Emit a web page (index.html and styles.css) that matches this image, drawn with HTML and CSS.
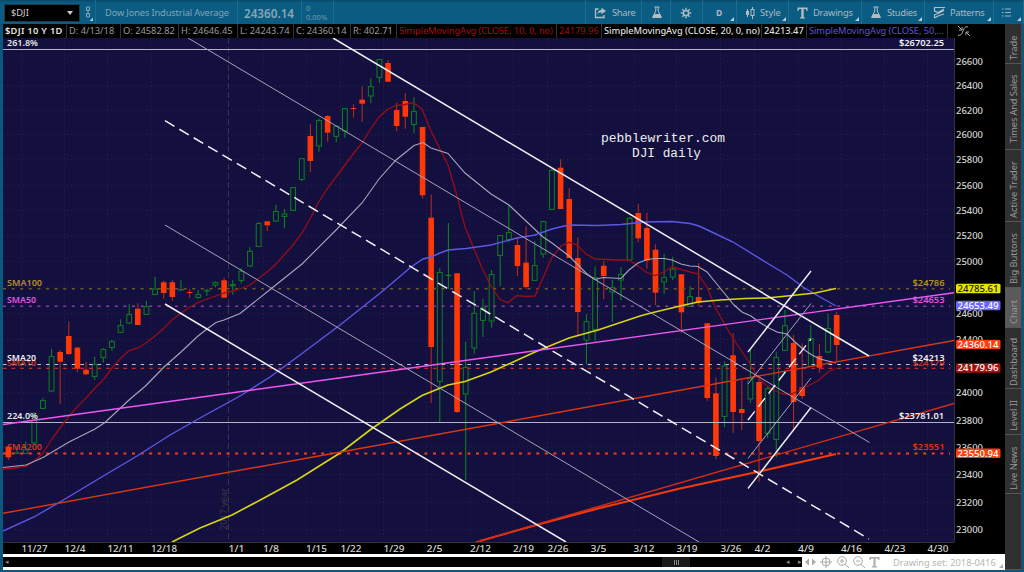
FILE: index.html
```html
<!DOCTYPE html>
<html lang="en">
<head>
    <meta charset="UTF-8">
    <meta name="viewport" content="width=device-width, initial-scale=1.0">
    <title>$DJI - Charts</title>
    <link rel="stylesheet" href="styles.css">
</head>
<body>
    <div class="app">
        <div class="toolbar">
            <div class="symbol-wrap">
                <div class="symbol"><span>$DJI</span><b class="drop"></b></div>
                <svg class="link-icon" width="8" height="18" viewBox="0 0 8 18"><path d="M1.500 6.500V3h3v3.500zM3 5.500v5M1.500 9.500v3.500h3V9.500z" fill="none" stroke="#7fa5b8"/><path d="M8 13.500v3.500H4.500z" fill="#b5c6cf"/></svg>
            </div>
            <div class="company">Dow Jones Industrial Average</div>
            <div class="last">24360.14</div>
            <div class="change"><span>0</span><span>0.00%</span></div>
            <div class="spacer"></div>
            <div class="tool share">
                <svg width="13" height="12" viewBox="0 0 13 12"><path d="M4.500 2H1.500v8.500h8.500V8" fill="none" stroke="#b3bdc2" stroke-width="1.300"/><path d="M7.500.8 12 4 7.500 7.300V5.300C5.300 5.300 4.300 6 3.500 8 3.600 4.800 5 3 7.500 2.800z" fill="#b3bdc2"/></svg>
                <span>Share</span>
            </div>
            <div class="tool flask">
                <svg width="12" height="13" viewBox="0 0 12 13"><path d="M3.500 1h5M4.800 1v4L1.500 11.500h9L7.200 5V1" fill="none" stroke="#b3bdc2"/><path d="M3.300 8h5.400l2 4H1.300z" fill="#b3bdc2"/></svg>
            </div>
            <div class="tool gear">
                <svg width="12" height="12" viewBox="0 0 12 12"><g stroke="#b3bdc2" stroke-width="1.500"><path d="M6 .8v2M6 9.200v2M.8 6h2M9.200 6h2M2.300 2.300l1.500 1.500M8.200 8.200l1.500 1.500M2.300 9.700l1.500-1.500M8.200 3.800l1.500-1.500"/><circle cx="6" cy="6" r="2.600" fill="none"/></g></svg>
            </div>
            <div class="tool day menu"><b>D</b></div>
            <div class="tool style menu">
                <svg width="10" height="12" viewBox="0 0 10 12"><path d="M2.500 2v8M7.500 0v12" stroke="#b3bdc2"/><path d="M1 4h3v4H1z" fill="#b3bdc2"/><rect x="6" y="2.500" width="3" height="6" fill="#0b5c83" stroke="#b3bdc2"/></svg>
                <span>Style</span>
            </div>
            <div class="tool drawings menu">
                <svg width="11" height="12" viewBox="0 0 11 12"><path d="M.5.500h10v3.500H9.500L8.800 2H6.700v8l1.300.700V11.500H3v-.8L4.300 10V2H2.200L1.500 4H.5z" fill="#b3bdc2"/></svg>
                <span>Drawings</span>
            </div>
            <div class="tool studies menu">
                <svg width="12" height="13" viewBox="0 0 12 13"><path d="M3.500 1h5M4.800 1v4L1.500 11.500h9L7.200 5V1" fill="none" stroke="#b3bdc2"/><path d="M3.300 8h5.400l2 4H1.300z" fill="#b3bdc2"/></svg>
                <span>Studies</span>
            </div>
            <div class="tool patterns menu">
                <svg width="12" height="13" viewBox="0 0 12 13"><path d="M1 1.500h11M1.500 1.500v3.500L5 6.500 11 3M1 9l4-1.500 6-3M1.500 12V9.500M1.500 12 6 9.500 11 8" fill="none" stroke="#b3bdc2" stroke-width="1.200"/></svg>
                <span>Patterns</span>
            </div>
            <div class="tool list menu">
                <svg width="9" height="9" viewBox="0 0 9 9"><path d="M0 1h1.500M3 1h6M0 4.500h1.500M3 4.500h6M0 8h1.500M3 8h6" stroke="#9ab3bf" stroke-width="1.200"/></svg>
            </div>
        </div>

        <div class="main">
            <div class="left">
                <div class="status">
                    <div class="cell c-sym">$DJI 10 Y 1D</div>
                    <div class="cell c-date">D: 4/13/18</div>
                    <div class="cell c-open">O: 24582.82</div>
                    <div class="cell c-high">H: 24646.45</div>
                    <div class="cell c-low">L: 24243.74</div>
                    <div class="cell c-close">C: 24360.14</div>
                    <div class="cell c-range">R: 402.71</div>
                    <div class="cell c-ma10 red">SimpleMovingAvg (CLOSE, 10, 0, no)</div>
                    <div class="cell c-val10 red">24179.96</div>
                    <div class="cell c-ma20 white">SimpleMovingAvg (CLOSE, 20, 0, no)</div>
                    <div class="cell c-val20 white">24213.47</div>
                    <div class="cell c-ma50 blue">SimpleMovingAvg (CLOSE, 50,...</div>
                    <div class="corner"><svg width="14" height="12" viewBox="0 0 14 12"><path d="M1 1l4 4M5 2v3H2M1 10c3 1 4-1 5-4s2-5 5-4M9 7l4 4M9 10V7h3" fill="none" stroke="#aaa"/></svg></div>
                </div>
                <svg class="chart" id="chart" viewBox="3 38 1002 516"></svg>
                <div class="bottom">
                    <div class="scroll">
                        <span class="arrow">◂</span>
                        <div class="thumb"><i></i><i></i><i></i></div>
                        <span class="arrow">◂</span><span class="arrow">▸</span>
                    </div>
                    <div class="draw-tools">
                        <svg width="78" height="14" viewBox="0 0 78 14" fill="none" stroke="#aaa">
                            <path d="M7 3.500v7L3 7zM10 3.500v7L14 7z" fill="#aaa" stroke="none"/>
                            <circle cx="24" cy="7" r="4"/><path d="M24 1v12M18 7h12"/>
                            <circle cx="40" cy="6" r="4.300"/><path d="M38 6h4M40 4v4M43 9l4 4"/>
                            <circle cx="56" cy="6" r="4.300"/><path d="M54 6h4M59 9l4 4"/>
                            <path d="M67.500 2h10v3h-1l-1-1.500h-2V11l1.500.500v1h-5v-1l1.500-.5V3.500h-2L68.500 5h-1z" fill="#aaa" stroke="none"/>
                        </svg>
                        <span>Drawing set: 2018-0416</span>
                        <b class="corner-mark"></b>
                    </div>
                </div>
            </div>
            <div class="tabs">
                <div class="tab t-trade">Trade</div>
                <div class="tab t-times">Times And Sales</div>
                <div class="tab t-active">Active Trader</div>
                <div class="tab t-big">Big Buttons</div>
                <div class="tab t-chart active">Chart</div>
                <div class="tab t-dash">Dashboard</div>
                <div class="tab t-level">Level II</div>
                <div class="tab t-news">Live News</div>
                <div class="tab t-rest"></div>
            </div>
        </div>
    </div>
    <script src="chart.js"></script>
</body>
</html>
```
FILE: styles.css
```css
body {
    margin: 0;
    background: #0b5c83;
    font-family: "Noto Sans", "Open Sans", sans-serif;
    font-size: 9.3px;
    color: #a9b9c1;
    overflow: hidden;
}
.app {
    width: 1024px;
    height: 572px;
    display: flex;
    flex-direction: column;
    background: #0a587e;
}
.toolbar {
    height: 24px;
    display: flex;
    align-items: stretch;
    background: linear-gradient(#07496b 0, #0b5c83 3px, #0b5c83 100%);
    white-space: nowrap;
}
.toolbar > div {
    box-sizing: border-box;
    display: flex;
    align-items: center;
    padding-top: 1px;
    border-right: 1px solid #1a6d92;
}
.symbol-wrap {
    width: 96px;
    padding-left: 4px;
    gap: 5px;
}
.symbol {
    width: 76px;
    height: 18px;
    box-sizing: border-box;
    padding: 0 6px;
    display: flex;
    align-items: center;
    justify-content: space-between;
    background: #000;
    border: 1px solid #1d3b49;
    color: #ccc;
}
.drop {
    border: 3px solid transparent;
    border-top: 4px solid #ccc;
    border-bottom: 0;
}
.company {
    width: 142px;
    padding-left: 9px;
    color: #7fa5b8;
    letter-spacing: -0.15px;
}
.last {
    width: 64px;
    padding-left: 6px;
    font-size: 11.7px;
    font-weight: 600;
    color: #88a6b4;
}
.toolbar .change {
    width: 32px;
    padding-left: 4px;
    flex-direction: column;
    align-items: flex-start;
    justify-content: center;
    font-size: 7.5px;
    line-height: 9px;
    color: #7198aa;
}
.spacer {
    flex: 1;
}
.toolbar .tool {
    gap: 5px;
    padding-left: 8px;
    position: relative;
    color: #a9b9c1;
}
.share {
    width: 56px;
    letter-spacing: -0.3px;
}
.flask {
    width: 29px;
}
.gear {
    width: 32px;
}
.toolbar .flask,
.toolbar .gear {
    padding-left: 9px;
}
.day {
    width: 34px;
}
.toolbar .day {
    padding-left: 13px;
    font-size: 8.5px;
}
.style {
    width: 52px;
}
.drawings {
    width: 73px;
    letter-spacing: -0.2px;
}
.studies {
    width: 63px;
    letter-spacing: -0.3px;
}
.patterns {
    width: 69px;
    letter-spacing: -0.3px;
}
.list {
    width: 30px;
}
.menu::after {
    content: "";
    position: absolute;
    right: 2px;
    bottom: 3px;
    border-left: 4px solid transparent;
    border-bottom: 4px solid #c0ccd2;
}
.main {
    height: 546px;
    display: flex;
    padding-left: 3px;
}
.left {
    width: 1002px;
    display: flex;
    flex-direction: column;
    background: #000;
}
.status {
    height: 14px;
    display: flex;
    line-height: 13px;
    white-space: nowrap;
    color: #9a9a9a;
}
.cell {
    box-sizing: border-box;
    padding-left: 2px;
    border-right: 1px solid #333;
}
.c-sym {
    width: 64px;
    font-weight: 600;
    letter-spacing: 0.3px;
    color: #e2e2e2;
}
.c-date { width: 54px; }
.c-open { width: 58px; }
.c-high { width: 59px; }
.c-low { width: 56px; }
.c-close { width: 57px; }
.c-range { width: 46px; }
.c-ma10 { width: 160px; }
.c-val10 { width: 45px; }
.c-ma20 { width: 160px; }
.c-val20 { width: 45px; }
.c-ma50 { width: 141px; }
.c-ma10,
.c-ma20,
.c-ma50 {
    letter-spacing: -0.08px;
}
.c-ma20,
.c-val20 {
    font-weight: 500;
}
.red { color: #a00f12; }
.white { color: #ddd; }
.blue { color: #5a56dc; }
.corner {
    padding: 1px 0 0 9px;
}
.chart {
    display: block;
    width: 1002px;
    height: 516px;
    font-size: 9.3px;
    overflow: visible;
}
.axis-label {
    fill: #d4d4d4;
    font-weight: 500;
}
.tag-label {
    font-weight: 500;
}
.level-label {
    font-weight: 600;
}
.note {
    font-family: "Liberation Mono", monospace;
    font-size: 12px;
    fill: #eee;
}
.year {
    fill: #3b3946;
}
.bottom {
    height: 16px;
    display: flex;
    background: #fff;
}
.scroll {
    width: 799px;
    height: 10px;
    margin-top: 3px;
    display: flex;
    align-items: center;
    gap: 6px;
    background: #000;
    font-size: 7px;
    line-height: 10px;
}
.arrow {
    padding-left: 2px;
    color: #888;
}
.thumb {
    width: 28px;
    height: 10px;
    margin-left: auto;
    margin-right: 88px;
    display: flex;
    align-items: center;
    justify-content: center;
    gap: 1px;
    background: #1a1a1a;
}
.thumb i {
    width: 1px;
    height: 5px;
    background: #888;
}
.draw-tools {
    flex: 1;
    display: flex;
    align-items: center;
    gap: 13px;
    color: #b4b4b4;
    white-space: nowrap;
}
.corner-mark {
    border-left: 4px solid transparent;
    border-bottom: 4px solid #aaa;
    margin: 8px 0 0 -10px;
}
.tabs {
    width: 17px;
    display: flex;
    flex-direction: column;
    color: #989898;
}
.tab {
    box-sizing: border-box;
    display: flex;
    align-items: center;
    justify-content: center;
    padding-bottom: 8px;
    writing-mode: vertical-rl;
    transform: rotate(180deg);
    background: #303030;
    border-top: 1px solid #555;
    border-left: 1px solid #444;
    white-space: nowrap;
}
.active {
    background: #5a5a5a;
}
.t-trade { height: 40px; }
.t-times {
    height: 86px;
    padding-bottom: 4px;
    letter-spacing: -0.15px;
}
.t-active { height: 72px; }
.t-big { height: 66px; }
.t-chart { height: 40px; }
.t-dash { height: 61px; }
.t-level { height: 46px; }
.t-news { height: 59px; }
.t-rest { height: 76px; }
```
FILE: chart.js
```js
const chart = document.getElementById('chart');

// body top, body bottom, wick top, wick bottom, 1 = up day
const candles = [
    [446.7,457.3,446,460,0],[452.7,453.3,446,454,1],[449.5,453.7,441.7,454,1],[420,443.3,412.3,444,1],
    [400.3,408.7,398,409,1],[356.3,391.3,349,392,1],[352,361.7,350,403.7,0],[336,354,321.7,355,0],
    [347.7,368.7,346.7,372.3,0],[369.7,374.3,361.7,375,0],[364,376.7,356.7,379.7,1],[349.3,357.7,348,362.7,1],
    [341.3,347.7,340,350.7,1],[325.3,332.7,319.3,333,1],[314.3,323.3,304.3,324,1],[308.7,325,303.3,325,0],
    [306.3,314.7,301,315,1],[288.7,294.7,276.7,295,1],[282.3,293,280.7,298.7,0],[282.3,297,280,301,0],
    [289.3,290,280.3,291,1],[292,292.7,289,297.7,0],[294.3,297.7,290,298.7,1],[290.3,291,288.7,296,1],
    [282.3,285.3,281.3,287.3,1],[280.3,297.7,277.7,298,0],[284.3,286,280,294.7,1],[271,280.7,268.3,283.3,1],
    [251,266.3,247.3,267,1],[223.3,246.7,222,247,1],[221.3,225.3,221,231,0],[211.3,221.3,204.7,222,1],
    [213.7,216.7,209,228.3,1],[187.3,210.7,187,211,1],[158.3,179.7,158,181,1],[136,161,124,172.3,0],
    [120.3,146.3,118.7,151.7,1],[116,132.7,115.3,141.7,0],[126,136.7,125,142,1],[108.3,131.3,108,137.7,1],
    [108,109,104.3,117.7,0],[99.7,103.7,86,122,0],[86.3,96.3,78.3,103,1],[59.3,77.7,59,82.7,1],
    [63,81.7,60,82,0],[110,126,102.7,131.3,0],[101,116.7,93,128.7,0],[111.3,124.7,97,133,1],
    [127,195.3,127,198.7,0],[217.7,347,194.7,403,0],[272.3,381.7,268,422.3,1],[275,275.7,223,289,1],
    [273.3,412,273,413,0],[367.3,394.3,341.7,480,1],[313,348.3,291.3,353.7,1],[307.7,320.7,299,337,1],
    [274.3,321.3,270,327.7,1],[235.3,255.7,235,286,1],[232.3,239.7,204.7,242.3,1],[245,266,237.3,276,0],
    [262.7,287,226.3,289,0],[265.3,280.7,241,281,1],[221.3,254.3,221,257.7,1],[170,209.7,167.7,210,1],
    [167.7,209,159.3,209,0],[199,258,188,258,0],[258,312,237.3,335.3,0],[321.3,340.3,314,364.3,1],
    [277.3,330,266.3,341.3,1],[265.7,276,261,299.3,0],[287.3,292.3,280,322,1],[274.3,280.3,267.3,300,1],
    [218,260.3,217,261,1],[213,238.3,203.7,242.3,0],[228,260.7,212.7,268.7,0],[249.7,292.7,244.3,305,0],
    [277.3,282.3,254,293.7,1],[269,277.3,256.7,280,1],[274.3,312.3,274,332.7,0],[296.3,306.7,286,307,1],
    [297,302.7,263.3,306.3,0],[323.3,398,323,400.7,0],[393.3,456,377.7,459.3,0],[365.7,416.7,361.3,427.3,1],
    [355.3,412,333,432.7,0],[409,413,380,430,0],[378.3,399.3,350,402.7,1],[382,441,376.7,482,0],
    [388.3,433.7,386.7,438.3,1],[357.3,439.7,351.7,457.3,1],[325.3,350.7,310,351,1],[343,402,335,430,0],
    [387.3,396,343.3,399,0],[338.3,366.7,325,367,1],[356,367.7,344,372.7,0],[328.3,352.3,313.7,353,1],
    [315,345,311.7,361.7,0]
];

const prices = [[26600,61],[26400,85.7],[26200,110],[26000,134.7],[25800,159.7],[25600,185],[25400,210],
    [25200,235.7],[25000,261.3],[24800,287],[24600,313.5],[24400,339.5],[24200,366],[24000,392.7],
    [23800,420],[23600,447],[23400,474.3],[23200,502],[23000,529.7]];

const dates = [['11/27',21.5],['12/4',64.5],['12/11',107.5],['12/18',151],['1/1',228.5],['1/8',263],
    ['1/15',306],['1/22',340.5],['1/29',383.5],['2/5',426.5],['2/12',470],['2/19',513],['2/26',547.5],
    ['3/5',590.5],['3/12',633.5],['3/19',676.5],['3/26',720.5],['4/2',754.5],['4/9',798],['4/16',841],
    ['4/23',884.5],['4/30',927.5]];

const sma10 = '3,469 15,468 27,466 38,458 43,453 52,439 60,428 70,415 77,407 86,398 95,388 104,379 112,368 120,359 129,350.500 138,348 146,343 155,336 164,328 172,320 181,313 190,307 198,302.500 207,299 216,296 224,293 233,291 241,288.500 250,285 258,279 267,272 276,264 284,255 293,245 302,233 310,219 318,203 327,189 336,177 345,165 353,154 362,143 370,130 379,117 388,109 396,105.500 405,104.500 413,102.500 422,109 431,131 440,149 448,165 457,196 465,227 474,249 482,268 491,286 500,299.500 508,302.700 517,295.500 526,296.500 535,296 543,278 552,257 561,246 569,242.300 577,245 586,254 595,259 620,260 629,260 638,266 646,272 655,275.500 664,272 672,267 681,269.500 698,274 707,287 716,309 725,325 734,340 749,362 757,376 766,385 775,391 784,394 792,394 801,389 810,385 819,380 828,372 836,368.500';
const sma20 = '3,467.500 26,465 43,457.500 69,442 95,429 105,422.500 129,400 146,385.500 164,367 181,352 198,336 207,329 216,322.500 224,320 240,313.500 272,288 302,264 336,230 362,203 379,179 396,160 414,145.500 423,142.500 431,148 448,153.500 465,173 491,194 509,205 526,221 543,237 552,243 569,256 587,274 595,279.500 603,277.500 621,278.500 629,270 638,263 647,259.500 655,258.500 664,258.500 672,260 681,264 690,266 698,266.500 707,272 716,283 725,294 734,305 742,312 751,316 759,322 769,328 777,332 787,334 795,342 803,349 812,355 820,359 836,363';
const sma50 = '3,531 34,517 65,499 100,478 137,456 170,435 200,418 240,396 270,377 300,355 340,325 384,290 411,267 423,259 431,257 440,253 448,250 466,248.500 491,245 517,238 535,235 552,229 562,226.500 570,225 598,225.500 621,224.500 645,222 672,221.500 690,223.500 699,226 716,234 733,242 767,263 787,275 803,287 820,297 836,306';
const sma100 = '172,542 200,528 232,515 264,498 297,480 340,453 370,430 400,409 422,395.500 448,385 465,381.500 491,372 535,352 569,338 598,330 640,316 651,313 680,306 698,302 720,300 745,298.500 767,298 792,295.500 815,293 836,288.500';
const sma200 = '480,541 540,524 600,508 680,488.500 757,472 836,454';

function line(x1, y1, x2, y2, color, width = 1, dash = '') {
    return `<line x1="${x1}" y1="${y1}" x2="${x2}" y2="${y2}" stroke="${color}" stroke-width="${width}" stroke-dasharray="${dash}"/>`;
}

function poly(points, color, width = 1.2) {
    return `<polyline points="${points}" fill="none" stroke="${color}" stroke-width="${width}"/>`;
}

function text(x, y, value, cls, length, color = '') {
    const fill = color ? `fill="${color}"` : '';
    return `<text x="${x}" y="${y}" class="${cls}" textLength="${length}" lengthAdjust="spacingAndGlyphs" ${fill}>${value}</text>`;
}

let out = '<defs><clipPath id="plot"><rect x="3" y="38" width="951" height="504"/></clipPath></defs>';
out += '<rect x="3" y="38" width="951" height="504" fill="#131040"/><g clip-path="url(#plot)">';

// grid
prices.forEach(([p, y]) => out += line(3, y, 954, y, '#27253f', 1, '1 3'));
dates.forEach(([d, x]) => {
    out += d === '1/1' ? line(x, 38, x, 542, '#38353c', 1, '6 3') : line(x, 38, x, 542, '#27253f', 1, '1 3');
});
out += '<text class="year" transform="translate(226.500 530) rotate(-90)" textLength="42">2017 year</text>';

// candles
candles.forEach(([top, bottom, high, low, up], i) => {
    const x = 8.4 + i * 8.628;
    if (up) {
        out += line(x, high, x, top, '#0b831a', 1.1) + line(x, bottom, x, low, '#0b831a', 1.1);
        out += `<rect x="${x - 2.4}" y="${top + 0.3}" width="4.8" height="${Math.max(bottom - top - 0.6, 0.3)}" fill="#131040" stroke="#0b831a"/>`;
    } else {
        out += line(x, high, x, low, '#b02c18', 1.1);
        out += `<rect x="${x - 2.8}" y="${top}" width="5.6" height="${Math.max(bottom - top, 1)}" fill="#ff3808"/>`;
    }
});

// horizontal levels
out += line(3, 49.5, 954, 49.5, '#b5b3c8');
out += line(3, 422.5, 954, 422.5, '#b5b3c8');
out += line(3, 288.7, 950, 288.7, '#6b5a22', 1.4, '3 5.6');
out += line(3, 306.2, 950, 306.2, '#8a3c9c', 1.4, '3 5.6');
out += line(3, 364.5, 950, 364.5, '#c5c3d0', 1, '3.600 5');
out += line(3, 368.4, 950, 368.4, '#c42d20', 1.1, '3.600 5');
out += line(3, 453.6, 950, 453.6, '#f53c1a', 2, '3 5.6');

// moving averages
out += poly(sma10, '#990d14', 1.3);
out += poly(sma20, '#a8a5bb', 1.1);
out += poly(sma50, '#5c58e4', 1.4);
out += poly(sma100, '#d8d512', 1.6);
out += poly(sma200, '#f43a0a', 2);

// trend lines
out += line(3, 424.5, 954, 292.8, '#ee58ee', 1.4);
out += line(3, 513.3, 954, 340.5, '#dc360f', 1.4);
out += line(476, 542, 954, 403.5, '#d42c14', 1.4);

// falling channel
out += line(333, 38, 869, 356, '#f0f0f4', 1.5);
out += line(188, 38, 869.5, 442.5, '#a5a3b8', 1);
out += line(165, 120.7, 869, 539, '#f0f0f4', 1.5, '11 5.700');
out += line(165, 225, 699, 542, '#a5a3b8', 1);
out += line(165, 304, 566, 542, '#f0f0f4', 1.5);

// rising channel
out += line(748, 352, 811, 271, '#f0f0f4', 1.4);
out += line(748, 384, 811, 303.5, '#a5a3b8', 1);
out += line(748, 420, 811, 339, '#f0f0f4', 1.4, '11 5.700');
out += line(748, 458.5, 811, 378, '#a5a3b8', 1);
out += line(748, 488.5, 811, 407.5, '#f0f0f4', 1.4);
out += '</g>';

// level names on the left, values on the right
out += text(7, 46, '261.8%', 'level-label', 31, '#e6e6e6');
out += text(7, 286, 'SMA100', 'level-label', 35, '#b3901c');
out += text(7, 303, 'SMA50', 'level-label', 29, '#e054e0');
out += text(7, 366, 'SMA10', 'level-label', 29, '#d8341c');
out += text(7, 361, 'SMA20', 'level-label', 29, '#f0f0f0');
out += text(7, 419, '224.0%', 'level-label', 31, '#e6e6e6');
out += text(7, 449.5, 'SMA200', 'level-label', 35, '#d8341c');
out += text(899, 46, '$26702.25', 'level-label', 45, '#f0f0f0');
out += text(912.5, 286, '$24786', 'level-label', 32, '#b3901c');
out += text(912.5, 303, '$24653', 'level-label', 32, '#e054e0');
out += text(912.5, 366, '$24179', 'level-label', 32, '#c8301c');
out += text(912.5, 361, '$24213', 'level-label', 32, '#f0f0f0');
out += text(899, 419, '$23781.01', 'level-label', 45, '#f0f0f0');
out += text(912.5, 449.5, '$23551', 'level-label', 32, '#d8341c');

out += text(601, 142, 'pebblewriter.com', 'note', 124);
out += text(632, 157, 'DJI daily', 'note', 69);

// axes
out += line(954.5, 38, 954.5, 542, '#333') + line(3, 542.5, 954, 542.5, '#333');
prices.forEach(([p, y]) => { if (p !== 24800 && p !== 24200) out += text(956, y + 3.5, p, 'axis-label', 27); });
dates.forEach(([d, x]) => out += text(x, 552, d, 'axis-label', d.length * 5 + 1));

// price tags
[['24785.61', 288.5, '#e6e600', '#222'], ['24653.49', 305.5, '#6a66fa', '#fff'], ['24360.14', 344.5, '#ff3c0c', '#fff'],
 ['24179.96', 368, '#a50f10', '#fff'], ['23550.94', 453.3, '#ff3c0c', '#fff']].forEach(([v, y, bg, fg]) => {
    out += `<rect x="956" y="${y - 4.8}" width="44.500" height="9.600" rx="1.500" fill="${bg}"/>`;
    out += text(957.5, y + 3.3, v, 'tag-label', 41, fg);
});

chart.innerHTML = out;
```
